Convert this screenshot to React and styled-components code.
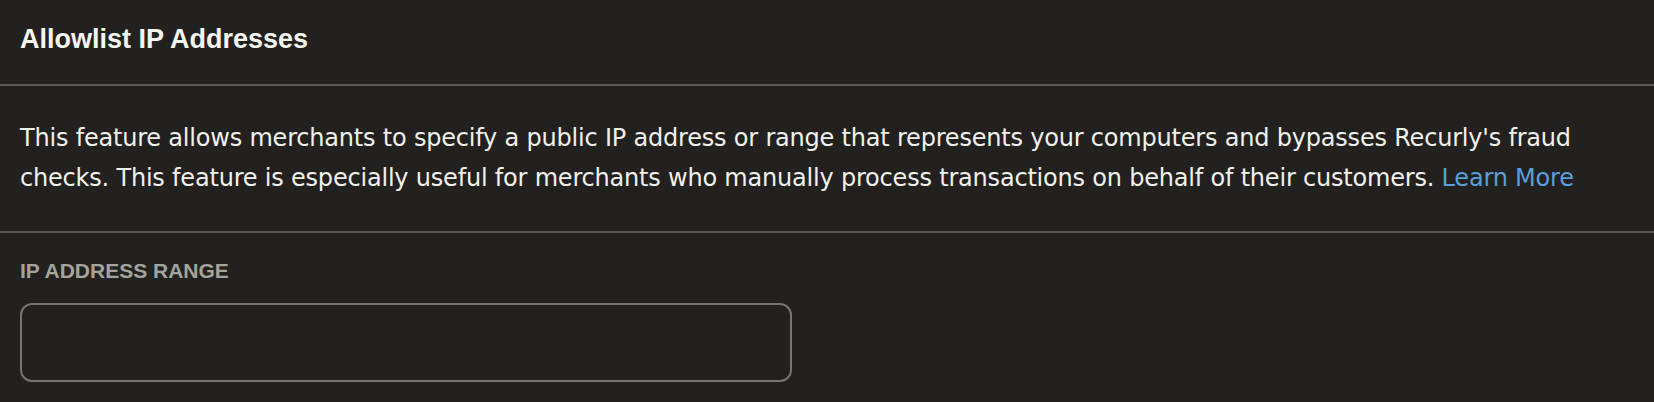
import React from 'react';
import styled, {createGlobalStyle} from 'styled-components';

const GlobalStyle = createGlobalStyle`
  html, body {
    margin: 0;
    padding: 0;
    background: #222120;
  }
  body {
    font-family: "Liberation Sans", Arial, sans-serif;
    color: #f4f4ef;
  }
`;

const Panel = styled.section`
  width: 1654px;
  min-height: 402px;
  background: #222120;
`;

const Header = styled.header`
  height: 86px;
  display: flex;
  align-items: center;
  padding: 0 20px 6px;
  border-bottom: 2px solid #5a5952;
  box-sizing: border-box;
`;

const Title = styled.h2`
  margin: 0;
  font-size: 27px;
  font-weight: 700;
  color: #f6f6f1;
`;

const Body = styled.div`
  padding: 32px 20px 0;
  height: 147px;
  box-sizing: border-box;
  border-bottom: 2px solid #5a5952;
`;

const Description = styled.p`
  margin: 0;
  font-family: "DejaVu Sans", "Liberation Sans", sans-serif;
  font-size: 24px;
  line-height: 40px;
  letter-spacing: -0.2px;
  color: #f1f1ec;
`;

const LearnMore = styled.a`
  color: #5a9fd9;
  text-decoration: none;
`;

const Field = styled.div`
  padding: 26px 20px 0;
  display: flex;
  flex-direction: column;
  gap: 20px;
`;

const Label = styled.label`
  font-size: 21px;
  font-weight: 700;
  color: #a5a49a;
  text-transform: uppercase;
`;

const Input = styled.input`
  width: 772px;
  height: 79px;
  box-sizing: border-box;
  border: 2px solid #77766e;
  border-radius: 12px;
  background: transparent;
  color: #f1f1ec;
  font-size: 22px;
  padding: 0 16px;
  outline: none;
`;

export default function App() {
    return (
        <>
            <GlobalStyle/>
            <Panel>
                <Header>
                    <Title>Allowlist IP Addresses</Title>
                </Header>
                <Body>
                    <Description>
                        This feature allows merchants to specify a public IP address or range that represents your
                        computers and bypasses Recurly's fraud checks. This feature is especially useful for merchants
                        who manually process transactions on behalf of their customers.{' '}
                        <LearnMore href="#">Learn More</LearnMore>
                    </Description>
                </Body>
                <Field>
                    <Label htmlFor="ip-range">IP Address Range</Label>
                    <Input id="ip-range" type="text"/>
                </Field>
            </Panel>
        </>
    );
}
